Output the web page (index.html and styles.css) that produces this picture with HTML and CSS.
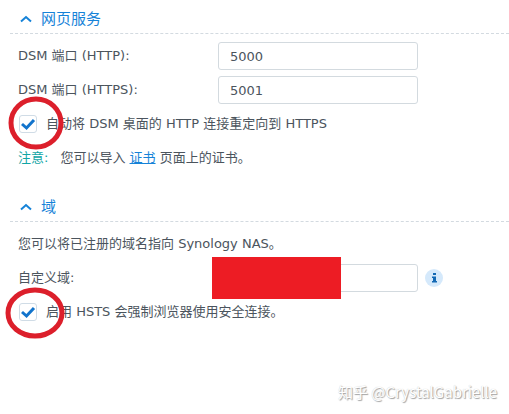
FILE: index.html
```html
<!DOCTYPE html>
<html lang="zh-CN">

<head>
    <meta charset="UTF-8">
    <meta name="viewport" content="width=device-width, initial-scale=1.0">
    <title>网页服务</title>
    <link rel="stylesheet" href="styles.css">
</head>

<body>
    <form class="settings">
        <section class="panel">
            <h2 class="panel-title">
                <button type="button" class="toggle">
                    <svg class="arrow" viewBox="0 0 12 8"><path d="M1 6.5 L6 2 L11 6.5" /></svg>
                    网页服务
                </button>
            </h2>
            <div class="row">
                <label class="label" for="http-port">DSM 端口 (HTTP):</label>
                <input class="text-input" type="text" id="http-port" value="5000">
            </div>
            <div class="row">
                <label class="label" for="https-port">DSM 端口 (HTTPS):</label>
                <input class="text-input" type="text" id="https-port" value="5001">
            </div>
            <div class="row">
                <span class="check">
                    <input type="checkbox" id="redirect" checked>
                    <svg class="tick" viewBox="0 0 18 18"><path d="M3 9 L7.5 13 L15 5" /></svg>
                    <svg class="circle circle-round" viewBox="0 0 56 54"><ellipse cx="28" cy="27" rx="25" ry="24" /></svg>
                </span>
                <label for="redirect">自动将 DSM 桌面的 HTTP 连接重定向到 HTTPS</label>
            </div>
            <p class="row">
                <span class="note">注意:</span>
                <span>您可以导入 <a href="#">证书</a> 页面上的证书。</span>
            </p>
        </section>

        <section class="panel">
            <h2 class="panel-title">
                <button type="button" class="toggle">
                    <svg class="arrow" viewBox="0 0 12 8"><path d="M1 6.5 L6 2 L11 6.5" /></svg>
                    域
                </button>
            </h2>
            <p class="row">您可以将已注册的域名指向 Synology NAS。</p>
            <div class="row">
                <label class="label" for="domain">自定义域:</label>
                <span class="domain">
                    <input class="text-input" type="text" id="domain">
                    <span class="mask"></span>
                </span>
                <svg class="info" viewBox="0 0 18 18">
                    <circle cx="9" cy="9" r="9" />
                    <path d="M8 4h3v2h-3z M7 7.5h4v4.5h1v1.5h-5v-1.5h1v-3h-1z" />
                </svg>
            </div>
            <div class="row">
                <span class="check">
                    <input type="checkbox" id="hsts" checked>
                    <svg class="tick" viewBox="0 0 18 18"><path d="M3 9 L7.5 13 L15 5" /></svg>
                    <svg class="circle circle-wide" viewBox="0 0 60 52"><ellipse cx="30" cy="26" rx="27" ry="23" /></svg>
                </span>
                <label for="hsts">启用 HSTS 会强制浏览器使用安全连接。</label>
            </div>
        </section>
    </form>
    <div class="watermark">知乎 @CrystalGabrielle</div>
</body>

</html>
```
FILE: styles.css
```css
body {
    box-sizing: border-box;
    min-height: 100vh;
    margin: 0;
    background-color: #fff;
    color: #4b545d;
    font-family: "DejaVu Sans", "Noto Sans CJK SC", sans-serif;
    font-size: 13px;
    line-height: 20px;
}

.settings {
    display: flex;
    flex-direction: column;
    gap: 20px;
    padding: 4px 0 20px 10px;
}

.panel {
    display: flex;
    flex-direction: column;
    gap: 6px;
}

.panel-title {
    margin: 0 0 2px;
    border-bottom: 1px dashed #d3dae0;
    font-size: 15px;
    font-weight: normal;
}

.toggle {
    display: flex;
    align-items: center;
    gap: 9px;
    height: 29px;
    padding: 0 10px;
    border: none;
    background: none;
    color: #1683d8;
    font: inherit;
    cursor: pointer;
}

.arrow {
    width: 12px;
    height: 8px;
    fill: none;
    stroke: #1683d8;
    stroke-width: 2;
}

.row {
    display: flex;
    align-items: center;
    height: 28px;
    margin: 0;
    padding-left: 8px;
    white-space: nowrap;
}

.label {
    width: 200px;
}

.text-input {
    box-sizing: border-box;
    width: 200px;
    height: 28px;
    padding: 0 11px;
    border: 1px solid #d3dadf;
    border-radius: 3px;
    background-color: #fff;
    color: #4b545d;
    font: inherit;
}

.check {
    display: grid;
    position: relative;
    margin: 0 9px 0 1px;
}

.check input {
    appearance: none;
    width: 18px;
    height: 18px;
    margin: 0;
    border: 1px solid #d0dce6;
    border-radius: 3px;
}

.tick {
    position: absolute;
    width: 18px;
    height: 18px;
    fill: none;
    stroke: #1274cc;
    stroke-width: 3;
    pointer-events: none;
}

/* red marks over the checkboxes */
.circle {
    position: absolute;
    z-index: 1;
    fill: none;
    stroke: #dc1f2b;
    stroke-width: 5;
    pointer-events: none;
}

.circle-round {
    top: -19px;
    left: -11px;
    width: 56px;
    height: 54px;
}

.circle-wide {
    top: -16px;
    left: -14px;
    width: 60px;
    height: 52px;
}

.note {
    margin-right: 12px;
    color: #12a5a5;
}

a {
    color: #1683d8;
}

.domain {
    position: relative;
    display: flex;
}

/* hides the domain name */
.mask {
    position: absolute;
    top: -7px;
    left: -6px;
    width: 129px;
    height: 42px;
    background-color: #ed1c24;
}

.info {
    width: 18px;
    height: 18px;
    margin-left: 7px;
    fill: #d5e9fb;
}

.info path {
    fill: #1369b4;
}

.watermark {
    position: absolute;
    right: 12px;
    bottom: 12px;
    color: #fff;
    font-family: "Noto Sans CJK SC", sans-serif;
    font-size: 15px;
    text-shadow: 1px 1px 1px #a0a0a0, 0 0 1px #c4c4c4;
}
```
